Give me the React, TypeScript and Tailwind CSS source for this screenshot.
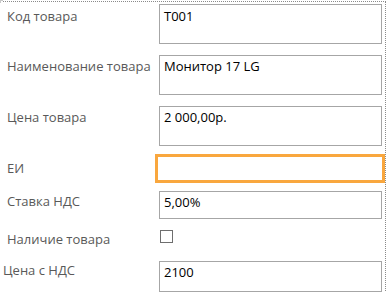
import React from "react";

const font = { fontFamily: '"Open Sans", "Noto Sans", sans-serif' };

function Field({ value, h, mtText = "pt-[1px]" }: { value: string; h: string; mtText?: string }) {
  return (
    <div className={`ml-[159px] w-[223px] ${h} border border-[#a6a6a6] bg-white pl-[4px] ${mtText} text-[13px] leading-[18px] text-black`}>
      {value}
    </div>
  );
}

export default function App() {
  return (
    <div className="relative w-[386px] h-[292px] bg-white overflow-hidden pt-[1px]" style={font}>
      <div className="absolute left-0 top-0 w-[3px] h-[3px] border-l border-t border-[#c8c8c8]" />
      <div className="ml-[3px] w-[383px] h-[300px] border-t border-r border-dotted border-[#8a8a8a] pt-[2px]">
        {/* Row 1 */}
        <div className="relative flex h-[40px]">
          <div className="absolute left-[4px] top-[3px] text-[13px] leading-[18px] text-[#595959]">Код товара</div>
          <div className="ml-[156px] w-[223px] h-[40px] border border-[#a6a6a6] pl-[4px] pt-[2px] text-[13px] leading-[18px] text-black">T001</div>
        </div>
        {/* Row 2 */}
        <div className="relative flex h-[40px] mt-[11px]">
          <div className="absolute left-[4px] top-[2px] text-[13px] leading-[18px] text-[#595959]">Наименование товара</div>
          <div className="ml-[156px] w-[223px] h-[40px] border border-[#a6a6a6] pl-[4px] pt-[1px] text-[13px] leading-[18px] text-black">Монитор 17 LG</div>
        </div>
        {/* Row 3 */}
        <div className="relative flex h-[40px] mt-[11px]">
          <div className="absolute left-[4px] top-[2px] text-[13px] leading-[18px] text-[#595959]">Цена товара</div>
          <div className="ml-[156px] w-[223px] h-[40px] border border-[#a6a6a6] pl-[4px] pt-[1px] text-[13px] leading-[18px] text-black">2 000,00р.</div>
        </div>
        {/* Row 4 */}
        <div className="relative flex h-[29px] mt-[8px]">
          <div className="absolute left-[4px] top-[5px] text-[13px] leading-[18px] text-[#595959]">ЕИ</div>
          <div className="ml-[152px] w-[230px] h-[29px] border-[3px] border-[#f9a73e]" />
        </div>
        {/* Row 5 */}
        <div className="relative flex h-[28px] mt-[8px]">
          <div className="absolute left-[4px] top-[1px] text-[13px] leading-[18px] text-[#595959]">Ставка НДС</div>
          <div className="ml-[156px] w-[223px] h-[28px] border border-[#a6a6a6] pl-[4px] pt-[1px] text-[13px] leading-[18px] text-black">5,00%</div>
        </div>
        {/* Row 6 */}
        <div className="relative flex h-[13px] mt-[11px]">
          <div className="absolute left-[4px] top-0 text-[13px] leading-[18px] text-[#595959]">Наличие товара</div>
          <div className="ml-[157px] w-[13px] h-[13px] border border-[#6e6e6e] bg-white" />
        </div>
        {/* Row 7 */}
        <div className="relative flex h-[31px] mt-[18px]">
          <div className="absolute left-0 top-0 text-[13px] leading-[18px] text-[#595959]">Цена с НДС</div>
          <div className="ml-[156px] w-[223px] h-[31px] border border-[#a6a6a6] pl-[4px] pt-[1px] text-[13px] leading-[18px] text-black">2100</div>
        </div>
      </div>
    </div>
  );
}
